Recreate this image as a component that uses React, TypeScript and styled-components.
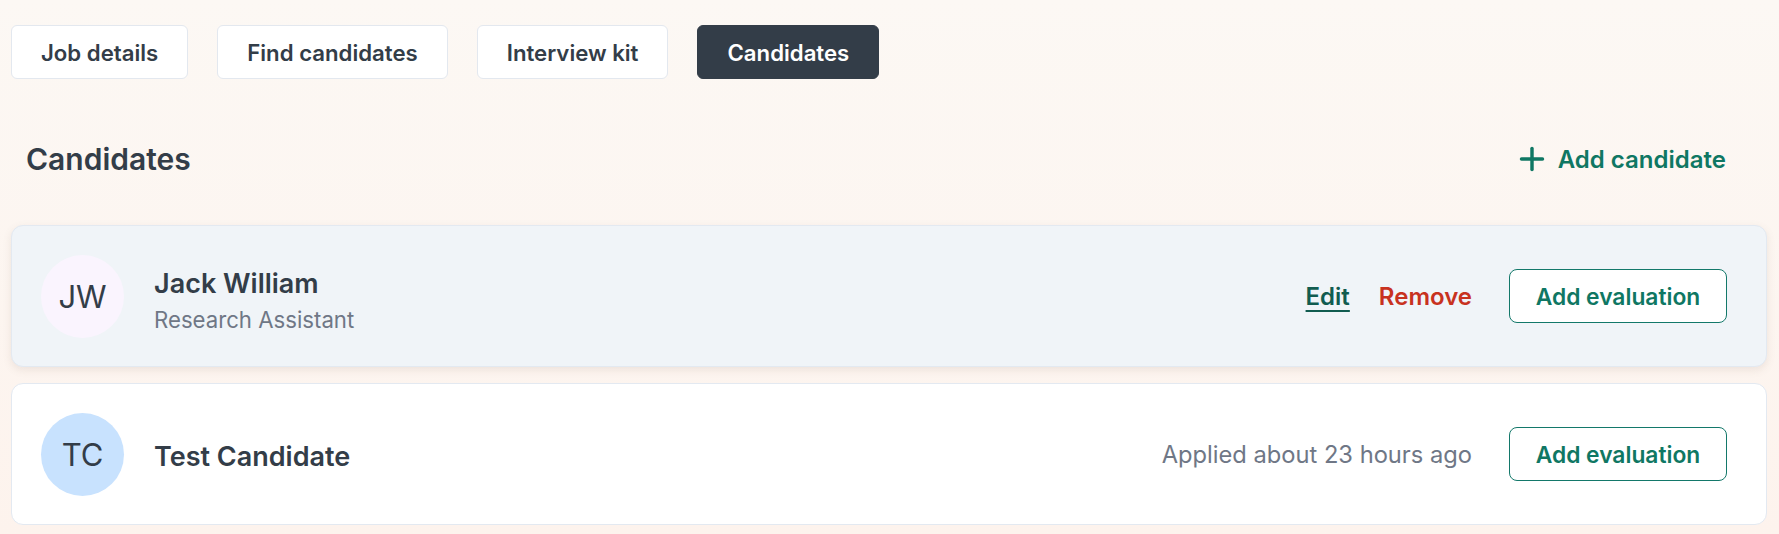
import React from 'react';
import styled, { createGlobalStyle } from 'styled-components';
import { Plus } from 'lucide-react';

const GlobalStyle = createGlobalStyle`
	* {
		box-sizing: border-box;
	}
	html, body {
		margin: 0;
		padding: 0;
	}
	body {
		font-family: Inter, 'Noto Sans', 'Liberation Sans', sans-serif;
		color: #333d48;
		background: linear-gradient(180deg, #fcf8f4 0%, #fdf3ed 100%);
		min-height: 534px;
	}
`;

type Candidate = {
	initials: string;
	name: string;
	role?: string;
	applied?: string;
	avatar: string;
	active?: boolean;
};

const candidates: Candidate[] = [
	{ initials: 'JW', name: 'Jack William', role: 'Research Assistant', avatar: '#faf4fe', active: true },
	{ initials: 'TC', name: 'Test Candidate', applied: 'Applied about 23 hours ago', avatar: '#c8e2fe' },
];

const tabs = ['Job details', 'Find candidates', 'Interview kit', 'Candidates'];

function App() {
	return (
		<>
			<GlobalStyle />
			<Page>
				<Tabs>
					{tabs.map((t) => (
						<Tab key={t} $active={t === 'Candidates'}>
							{t}
						</Tab>
					))}
				</Tabs>
				<SectionHeader>
					<h2>Candidates</h2>
					<AddLink>
						<Plus size={36} strokeWidth={2.3} />
						Add candidate
					</AddLink>
				</SectionHeader>
				<List>
					{candidates.map((c) => (
						<Card key={c.name} $active={c.active}>
							<Avatar $bg={c.avatar}>{c.initials}</Avatar>
							<Info $offset={c.role ? 7 : 4}>
								<Name>{c.name}</Name>
								{c.role && <Role>{c.role}</Role>}
							</Info>
							<Actions>
								{c.active ? (
									<>
										<EditLink>Edit</EditLink>
										<RemoveLink>Remove</RemoveLink>
									</>
								) : (
									<Applied>{c.applied}</Applied>
								)}
								<EvalButton>Add evaluation</EvalButton>
							</Actions>
						</Card>
					))}
				</List>
			</Page>
		</>
	);
}

const Page = styled.div`
	padding: 25px 12px 0 11px;
`;

const Tabs = styled.div`
	display: flex;
	gap: 29px;
`;

const Tab = styled.button<{ $active?: boolean }>`
	height: 54px;
	padding: 0 29px;
	border-radius: 6px;
	font-family: inherit;
	font-size: 22.2px;
	font-weight: 600;
	border: 1.5px solid ${(p) => (p.$active ? '#333d48' : '#e3e8ef')};
	background: ${(p) => (p.$active ? '#333d48' : '#ffffff')};
	color: ${(p) => (p.$active ? '#ffffff' : '#333d48')};
`;

const SectionHeader = styled.div`
	display: flex;
	align-items: center;
	justify-content: space-between;
	height: 54px;
	margin: 53px 0 39px;
	padding: 0 41px 0 15px;
	h2 {
		margin: 0;
		font-size: 30px;
		font-weight: 600;
		color: #333d48;
	}
`;

const AddLink = styled.a`
	display: flex;
	align-items: center;
	gap: 8px;
	font-size: 24px;
	font-weight: 600;
	color: #0f7763;
	cursor: pointer;
`;

const List = styled.div`
	display: flex;
	flex-direction: column;
	gap: 16px;
`;

const Card = styled.div<{ $active?: boolean }>`
	display: flex;
	align-items: center;
	height: 142px;
	padding: 0 39px 0 29px;
	border-radius: 12px;
	border: 1.5px solid #e3e9f1;
	background: ${(p) => (p.$active ? '#f0f4f8' : '#ffffff')};
	box-shadow: ${(p) => (p.$active ? '0 3px 8px rgba(120, 100, 80, 0.12)' : 'none')};
`;

const Avatar = styled.div<{ $bg: string }>`
	width: 83px;
	height: 83px;
	border-radius: 50%;
	background: ${(p) => p.$bg};
	display: flex;
	align-items: center;
	justify-content: center;
	font-size: 31px;
	font-weight: 400;
	color: #333d48;
	flex-shrink: 0;
`;

const Info = styled.div<{ $offset: number }>`
	display: flex;
	flex-direction: column;
	gap: 6px;
	margin-left: 30px;
	padding-top: ${(p) => p.$offset}px;
	flex: 1;
`;

const Name = styled.div`
	font-size: 27px;
	font-weight: 600;
	color: #333d48;
`;

const Role = styled.div`
	font-size: 22.2px;
	color: #6f7786;
`;

const Actions = styled.div`
	display: flex;
	align-items: center;
`;

const EditLink = styled.a`
	font-size: 24px;
	font-weight: 600;
	color: #115c50;
	text-decoration: underline;
	text-decoration-thickness: 2px;
	text-underline-offset: 5px;
	cursor: pointer;
`;

const RemoveLink = styled.a`
	margin-left: 29px;
	font-size: 24px;
	font-weight: 600;
	color: #c8321f;
	cursor: pointer;
`;

const Applied = styled.span`
	font-size: 23.7px;
	color: #6f7786;
`;

const EvalButton = styled.button`
	margin-left: 37px;
	width: 218px;
	height: 54px;
	border-radius: 8px;
	border: 1.5px solid #13786a;
	background: #ffffff;
	font-family: inherit;
	font-size: 22.8px;
	font-weight: 600;
	color: #0f7763;
	cursor: pointer;
`;

export default App;
